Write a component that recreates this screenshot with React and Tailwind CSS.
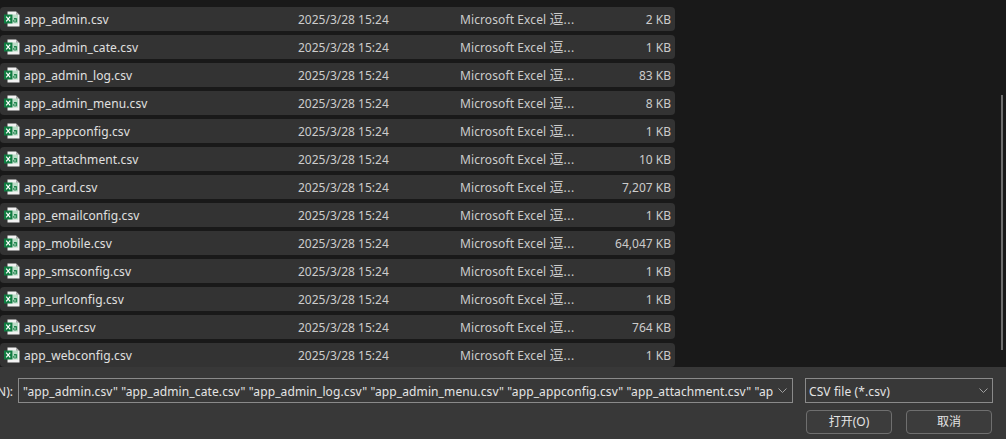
import React from "react";

const files = [
  { name: "app_admin.csv", size: "2 KB" },
  { name: "app_admin_cate.csv", size: "1 KB" },
  { name: "app_admin_log.csv", size: "83 KB" },
  { name: "app_admin_menu.csv", size: "8 KB" },
  { name: "app_appconfig.csv", size: "1 KB" },
  { name: "app_attachment.csv", size: "10 KB" },
  { name: "app_card.csv", size: "7,207 KB" },
  { name: "app_emailconfig.csv", size: "1 KB" },
  { name: "app_mobile.csv", size: "64,047 KB" },
  { name: "app_smsconfig.csv", size: "1 KB" },
  { name: "app_urlconfig.csv", size: "1 KB" },
  { name: "app_user.csv", size: "764 KB" },
  { name: "app_webconfig.csv", size: "1 KB" },
];

const selected =
  '"app_admin.csv" "app_admin_cate.csv" "app_admin_log.csv" "app_admin_menu.csv" "app_appconfig.csv" "app_attachment.csv" "app_card.csv"';

const ExcelIcon = () => (
  <svg width="16" height="16" viewBox="0 0 16 16" className="shrink-0">
    <path d="M3.5 0.5h8.5l3.5 3.5v11.5H3.5z" fill="#f2f2f2" />
    <path d="M12 0.5l3.5 3.5H12z" fill="#a8a8a8" />
    <rect x="8.5" y="3.5" width="5.5" height="9" fill="#b9dcc6" />
    <path d="M10 7.5h2.6v3.4h-2.2q-0.9 0-0.9-1t0.9-1h2.2" fill="none" stroke="#107c41" strokeWidth="0.9" />
    <rect x="0" y="3.5" width="8.5" height="9" fill="#107c41" />
    <path d="M2.2 5.6l4 4.8M6.2 5.6l-4 4.8" stroke="#fff" strokeWidth="1.2" />
  </svg>
);

// thin combo box arrow
const Chevron = () => (
  <svg width="9" height="5" viewBox="0 0 9 5" className="shrink-0">
    <path d="M0.5 0.5l4 4 4-4" fill="none" stroke="#a0a0a0" strokeWidth="1" />
  </svg>
);

const Row = ({ file }) => (
  <div className="flex h-6 w-[675px] items-center rounded-sm bg-[#333333] text-[#e0e0e0]">
    <div className="flex w-[298px] items-center gap-1 pl-[4px]">
      <ExcelIcon />
      <span className="pt-[2px] tracking-[0.1px]">{file.name}</span>
    </div>
    <div className="w-[162px] pt-[2px] text-[#cccccc]">2025/3/28 15:24</div>
    <div className="w-[120px] whitespace-nowrap pt-[2px] text-[#cccccc]">
      <span className="tracking-[0.1px]">Microsoft Excel </span>
      <span className="text-[14px] leading-none">逗</span>
      <span className="tracking-[0.6px]">...</span>
    </div>
    <div className="flex-1 pr-[4px] pt-[2px] text-right text-[#cccccc]">{file.size}</div>
  </div>
);

export default function App() {
  return (
    <div className="flex h-[439px] w-[1006px] flex-col overflow-hidden bg-[#191919] font-['Noto_Sans','Noto_Sans_CJK_SC',sans-serif] text-[12px]">
      <div className="relative flex flex-1 flex-col gap-1 pt-[7px]">
        {files.map((f) => (
          <Row key={f.name} file={f} />
        ))}
        <div className="absolute right-[3px] top-[95px] h-[255px] w-[2px] bg-[#6e6e6e]" />
      </div>

      <div className="h-[72px] bg-[#383838] text-[#e4e4e4]">
        <div className="flex items-center pt-[11px]">
          <div className="flex w-[18px] shrink-0 justify-end whitespace-nowrap pr-[5px] pt-[2px]">N):</div>
          <div className="flex h-[25px] w-[775px] items-center border border-[#8a8a8a] pl-[4px]">
            <div className="flex-1 overflow-hidden whitespace-nowrap pt-[2px] tracking-[0.11px]">{selected}</div>
            <div className="flex w-[19px] shrink-0 justify-center">
              <Chevron />
            </div>
          </div>
          <div className="ml-3 flex h-[25px] w-[188px] items-center justify-between border border-[#8a8a8a] pl-[3px] pr-[4px]">
            <span className="pt-[2px] tracking-[0.1px]">CSV file (*.csv)</span>
            <Chevron />
          </div>
        </div>
        <div className="mt-[7px] flex justify-end gap-[14px] pr-[14px]">
          <button className="h-6 w-[86px] rounded-[4px] border border-[#6f6f6f] bg-[#3c3c3c]">打开(O)</button>
          <button className="h-6 w-[86px] rounded-[4px] border border-[#6f6f6f] bg-[#3c3c3c]">取消</button>
        </div>
      </div>
    </div>
  );
}
